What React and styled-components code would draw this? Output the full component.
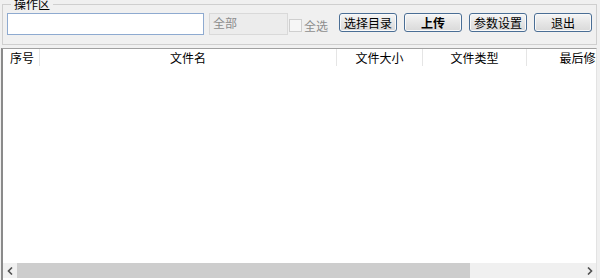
import React from "react";
import styled, { createGlobalStyle } from "styled-components";

const GlobalStyle = createGlobalStyle`
  html, body {
    margin: 0;
    padding: 0;
    background: #f0f0f0;
  }
  body {
    font-family: "Noto Sans CJK SC", "DejaVu Sans", sans-serif;
    font-size: 12px;
    color: #000;
  }
`;

const columns = [
  { title: "序号", width: 37, align: "left" },
  { title: "文件名", width: 297, align: "center" },
  { title: "文件大小", width: 86, align: "center" },
  { title: "文件类型", width: 104, align: "center" },
  { title: "最后修改", width: 114, align: "center" },
];

const buttons = [
  { label: "选择目录" },
  { label: "上传", bold: true },
  { label: "参数设置" },
  { label: "退出" },
];

const App = () => {
  return (
    <Window>
      <GlobalStyle />
      <GroupBox>
        <Legend>操作区</Legend>
        <ControlRow>
          <PathInput type="text" />
          <DisabledField>全部</DisabledField>
          <CheckLabel>
            <CheckBox />
            全选
          </CheckLabel>
          <ButtonGroup>
            {buttons.map((b) => (
              <PushButton key={b.label} $bold={b.bold}>
                {b.label}
              </PushButton>
            ))}
          </ButtonGroup>
        </ControlRow>
      </GroupBox>

      <ListView>
        <HeaderRow>
          {columns.map((c) => (
            <HeaderCell key={c.title} $width={c.width} $align={c.align}>
              {c.title}
            </HeaderCell>
          ))}
        </HeaderRow>
        <ListBody />
        <HScroll>
          <ArrowButton>
            <svg width="7" height="8" viewBox="0 0 7 8">
              <path d="M5 0.5 L1.5 4 L5 7.5" fill="none" stroke="#505050" strokeWidth="1.6" />
            </svg>
          </ArrowButton>
          <Track>
            <Thumb />
          </Track>
          <ArrowButton>
            <svg width="7" height="8" viewBox="0 0 7 8">
              <path d="M2 0.5 L5.5 4 L2 7.5" fill="none" stroke="#505050" strokeWidth="1.6" />
            </svg>
          </ArrowButton>
        </HScroll>
      </ListView>
    </Window>
  );
};

export default App;

const Window = styled.div`
  width: 600px;
  height: 280px;
  display: flex;
  flex-direction: column;
  overflow: hidden;
  background: #f0f0f0;
`;

const GroupBox = styled.fieldset`
  margin: -2px 3px 0 2px;
  padding: 3px 4px 9px 4px;
  border: 1px solid #cfcfcf;
  min-width: 0;
`;

const Legend = styled.legend`
  margin-left: 4px;
  padding: 0 3px;
  line-height: 12px;
  font-size: 12px;
  color: #000;
`;

const ControlRow = styled.div`
  display: flex;
  align-items: flex-start;
  height: 22px;
  white-space: nowrap;

  & > * {
    flex-shrink: 0;
  }
`;

const PathInput = styled.input`
  box-sizing: border-box;
  width: 197px;
  height: 22px;
  margin: 0;
  border: 1px solid #8eaad0;
  background: #fff;
  outline: none;
`;

const DisabledField = styled.div`
  box-sizing: border-box;
  width: 79px;
  height: 22px;
  margin-left: 5px;
  padding: 2px 0 0 3px;
  border: 1px solid #d9d9d9;
  background: #ececec;
  color: #8d8d8d;
  line-height: 14px;
`;

const CheckLabel = styled.label`
  display: flex;
  align-items: center;
  gap: 2px;
  height: 22px;
  margin-left: 1px;
  margin-top: 1px;
  color: #8d8d8d;
`;

const CheckBox = styled.span`
  box-sizing: border-box;
  width: 13px;
  height: 13px;
  border: 1px solid #cfcfcf;
  background: #f6f6f6;
`;

const ButtonGroup = styled.div`
  display: flex;
  gap: 7px;
  margin-left: 11px;
`;

const PushButton = styled.button`
  box-sizing: border-box;
  width: 58px;
  height: 19px;
  margin: 0;
  padding: 0;
  border: 1px solid #4a6e95;
  border-radius: 3px;
  background: linear-gradient(#f6f6f6, #e6e6e6 50%, #d9d9d9);
  box-shadow: inset 0 0 0 1px #f9f9f9;
  font-family: inherit;
  font-size: 12px;
  line-height: 15px;
  font-weight: ${(p) => (p.$bold ? 700 : 400)};
  color: #000;
`;

const ListView = styled.div`
  flex: 1;
  display: flex;
  flex-direction: column;
  margin: 3px 3px 0 1px;
  border-top: 1px solid #a0a0a0;
  border-left: 2px solid #8a8a8a;
  border-right: 1px solid #e3e3e3;
  background: #fff;
  min-height: 0;
  overflow: hidden;
`;

const HeaderRow = styled.div`
  display: flex;
  height: 17px;
  flex-shrink: 0;
  background: #fff;
  white-space: nowrap;
`;

const HeaderCell = styled.div`
  box-sizing: border-box;
  flex: 0 0 ${(p) => p.$width}px;
  padding-left: ${(p) => (p.$align === "left" ? 7 : 0)}px;
  text-align: ${(p) => p.$align};
  line-height: 17px;
  border-right: 1px solid #e5e5e5;
  overflow: hidden;
`;

const ListBody = styled.div`
  flex: 1;
  background: #fff;
`;

const HScroll = styled.div`
  display: flex;
  height: 15px;
  margin-bottom: 2px;
  flex-shrink: 0;
  background: #f0f0f0;
`;

const ArrowButton = styled.div`
  width: 14px;
  display: flex;
  align-items: center;
  justify-content: center;
  background: #f0f0f0;
`;

const Track = styled.div`
  flex: 1;
  display: flex;
  background: #f0f0f0;
`;

const Thumb = styled.div`
  width: 453px;
  background: #cdcdcd;
`;
